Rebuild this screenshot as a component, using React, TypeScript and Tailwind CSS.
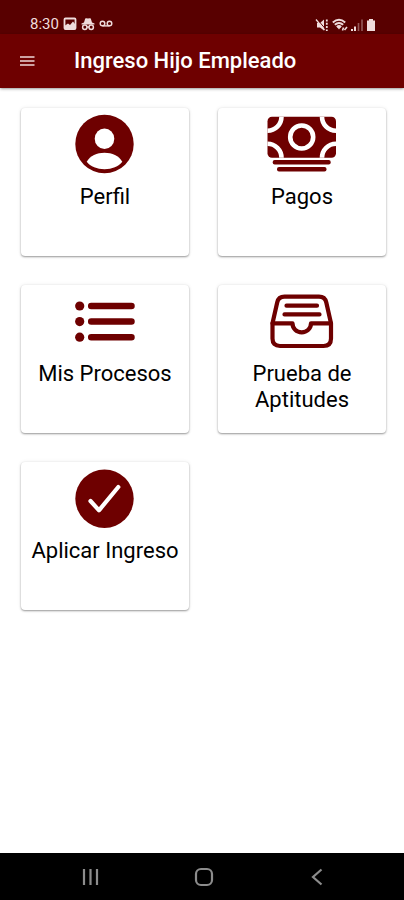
import React from 'react';

type Tile = {
  label: string;
  icon: React.ReactNode;
};

const ICON_CLASS = 'w-[76px] h-[76px] text-[#6e0000]';

function ProfileIcon() {
  return (
    <svg viewBox="0 1 76 76" className={ICON_CLASS} aria-hidden="true">
      <circle cx="37.5" cy="37" r="29.2" fill="currentColor" />
      <ellipse cx="37.5" cy="31.7" rx="9.8" ry="10.3" fill="white" />
      <path d="M19.7 54.8C23 48.8 30 45.8 37.5 45.8S52 48.8 55.3 54.8C51.5 59.5 45 62.2 37.5 62.2S23.5 59.5 19.7 54.8Z" fill="white" />
    </svg>
  );
}

function CashIcon() {
  return (
    <svg viewBox="0 1 76 76" className={ICON_CLASS} aria-hidden="true">
      <clipPath id="bill">
        <rect x="3.5" y="9.7" width="68.5" height="41" rx="4.5" />
      </clipPath>
      <g clipPath="url(#bill)">
        <rect x="3" y="9" width="70" height="42" fill="currentColor" />
        <g fill="none" stroke="white" strokeWidth="4.6">
          <circle cx="3.5" cy="9.7" r="14" />
          <circle cx="72" cy="9.7" r="14" />
          <circle cx="3.5" cy="50.7" r="14" />
          <circle cx="72" cy="50.7" r="14" />
          <circle cx="37.7" cy="30" r="11.5" />
        </g>
      </g>
      <rect x="8.7" y="53" width="58" height="4.6" rx="2" fill="currentColor" />
      <rect x="13" y="60" width="49.5" height="4.6" rx="2" fill="currentColor" />
    </svg>
  );
}

function ListIcon() {
  return (
    <svg viewBox="0 1 76 76" className={ICON_CLASS} aria-hidden="true">
      <g fill="currentColor">
        <circle cx="12.7" cy="22" r="4.6" />
        <circle cx="12.7" cy="37.6" r="4.6" />
        <circle cx="12.7" cy="53.2" r="4.6" />
      </g>
      <path d="M24.2 22H64.5M24.2 37.600H64.5M24.2 53.200H64.5" stroke="currentColor" strokeWidth="6.500" strokeLinecap="round" />
    </svg>
  );
}

function TrayIcon() {
  return (
    <svg viewBox="0 1 76 76" className={ICON_CLASS} aria-hidden="true">
      <g fill="none" stroke="currentColor" strokeWidth="4.2" strokeLinecap="round" strokeLinejoin="round">
        <path d="M8.5 39.3L13.2 18.5Q14.5 12.7 20.5 12.7H55Q61 12.7 62.3 18.5L67 39.3V54.500Q67 62 59.500 62H16Q8.500 62 8.500 54.500Z" />
        <path d="M8.5 39.3H28.5C28.5 44.5 32.5 48.3 37.7 48.3S47 44.5 47 39.3H67" />
        <path d="M22.5 21.7H53M20.5 30.4H55.5" />
      </g>
    </svg>
  );
}

function CheckIcon() {
  return (
    <svg viewBox="0 1 76 76" className={ICON_CLASS} aria-hidden="true">
      <circle cx="37.5" cy="37.7" r="29.2" fill="currentColor" />
      <path d="M23.5 40L32 49.3L51.300 26" fill="none" stroke="white" strokeWidth="4.2" strokeLinecap="round" strokeLinejoin="round" />
    </svg>
  );
}

const tiles: Tile[] = [
  { label: 'Perfil', icon: <ProfileIcon /> },
  { label: 'Pagos', icon: <CashIcon /> },
  { label: 'Mis Procesos', icon: <ListIcon /> },
  { label: 'Prueba de Aptitudes', icon: <TrayIcon /> },
  { label: 'Aplicar Ingreso', icon: <CheckIcon /> },
];

function StatusBar() {
  return (
    <div className="flex h-[34px] items-end justify-between bg-[#580000] pl-[30px] pr-7 pb-[2px] text-[#f0dcdc]">
      <div className="flex items-center gap-1">
        <span className="text-[15px] leading-4">8:30</span>
        {/* picture */}
        <svg viewBox="0 0 14 14" className="h-[14px] w-[14px]" aria-hidden="true">
          <rect x="1.5" y="1.5" width="11" height="10.5" rx="1" fill="none" stroke="currentColor" strokeWidth="1.8" />
          <path d="M2 11.500V8.500L5 6.500L7 8L10 4.500L12 7V11.500Z" fill="currentColor" />
        </svg>
        {/* incognito */}
        <svg viewBox="0 0 14 14" className="h-[14px] w-[14px]" aria-hidden="true">
          <path d="M4.2 1.5Q5 .8 7 1.5Q9 .8 9.8 1.5L11 5.5L13.5 6.5V7.5H.5V6.5L3 5.5Z" fill="currentColor" />
          <g fill="none" stroke="currentColor" strokeWidth="1.5">
            <circle cx="3.8" cy="10.3" r="2.2" />
            <circle cx="10.2" cy="10.3" r="2.2" />
            <path d="M6 10H8" />
          </g>
        </svg>
        {/* voicemail */}
        <svg viewBox="0 0 14 14" className="h-[14px] w-[14px]" aria-hidden="true">
          <g fill="none" stroke="currentColor" strokeWidth="1.4">
            <circle cx="3.5" cy="6.5" r="2.3" />
            <circle cx="10.5" cy="6.5" r="2.3" />
            <path d="M3.5 8.9H10.5" />
          </g>
        </svg>
      </div>
      <div className="flex items-center gap-[3px]">
        {/* muted with vibration */}
        <svg viewBox="0 0 14 14" className="h-[14px] w-[14px]" aria-hidden="true">
          <path d="M2 5H5L9 1.5V12.5L5 9.5H2Z" fill="currentColor" />
          <path d="M2 1L10 10.500" stroke="#580000" strokeWidth="1" />
          <path d="M1 1.500L9.500 12" stroke="currentColor" strokeWidth="1.300" />
          <path d="M11.8 1.500V3.500M11.8 4.800V6.800M11.8 8.100V10.100M11.8 11.400V13" fill="none" stroke="currentColor" strokeWidth="1.800" />
        </svg>
        {/* wifi */}
        <svg viewBox="0 0 16 14" className="h-[14px] w-4" aria-hidden="true">
          <g fill="none" stroke="currentColor" strokeWidth="1.9">
            <path d="M.8 4.5Q7 -1 13.2 4.5" />
            <path d="M2.8 6.8Q7 3 11.2 6.8" />
            <path d="M4.8 9Q7 7 9.2 9" />
          </g>
          <path d="M5 9H9L7 11.5Z" fill="currentColor" />
          <path d="M10.500 12.500L11.500 9.500M12.500 12L15 9" stroke="currentColor" strokeWidth="1.600" fill="none" />
        </svg>
        {/* signal */}
        <svg viewBox="0 0 12 14" className="h-[14px] w-3" aria-hidden="true">
          <path d="M1 13V11M4 13V8.5" stroke="currentColor" strokeWidth="2" />
          <path d="M7.5 13V5M11 13V1.5" stroke="currentColor" strokeOpacity="0.4" strokeWidth="1.6" />
        </svg>
        {/* battery */}
        <svg viewBox="0 0 10 14" className="h-[14px] w-[10px]" aria-hidden="true">
          <path d="M3 1H7V2.5H9V13H1V2.5H3Z" fill="currentColor" />
        </svg>
      </div>
    </div>
  );
}

function Header() {
  return (
    <header className="flex h-[54px] items-center bg-[#6e0000] pl-5 text-white shadow-sm shadow-black/30">
      <button type="button" aria-label="Menú" className="mr-[38px] flex h-8 w-4 items-center justify-center">
        <svg viewBox="0 0 16 12" className="h-3 w-4" aria-hidden="true">
          <path d="M0 2H14.500M0 6H14.500M0 10H14.500" stroke="#eed6d6" strokeWidth="1.5" />
        </svg>
      </button>
      <h1 className="text-[22px] leading-7 font-medium">Ingreso Hijo Empleado</h1>
    </header>
  );
}

function NavBar() {
  return (
    <nav className="flex h-[47px] items-center justify-around bg-black pl-[35px] pr-[31px] text-[#8c8c8c]">
      <button type="button" aria-label="Recientes">
        <svg viewBox="0 0 20 20" className="h-5 w-5" aria-hidden="true">
          <path d="M3 2V18M9.5 2V18M16 2V18" stroke="currentColor" strokeWidth="2.2" />
        </svg>
      </button>
      <button type="button" aria-label="Inicio">
        <svg viewBox="0 0 20 20" className="h-5 w-5" aria-hidden="true">
          <rect x="2" y="2" width="16" height="16" rx="5" fill="none" stroke="currentColor" strokeWidth="2.2" />
        </svg>
      </button>
      <button type="button" aria-label="Atrás">
        <svg viewBox="0 0 20 20" className="h-5 w-5" aria-hidden="true">
          <path d="M14.500 2.500L6 10L14.500 17.500" fill="none" stroke="currentColor" strokeWidth="2.2" />
        </svg>
      </button>
    </nav>
  );
}

export default function App() {
  return (
    <div className="flex min-h-screen flex-col bg-white font-[Roboto,'Liberation_Sans',sans-serif]">
      <StatusBar />
      <Header />
      <main className="flex-1 py-5 pl-[21px] pr-[18px]">
        <div className="grid grid-cols-2 gap-[29px]">
          {tiles.map((tile) => (
            <button
              key={tile.label}
              type="button"
              className="flex h-[148px] flex-col items-center rounded bg-white px-1 shadow-[0_1px_2px_rgba(0,0,0,0.38),0_0_4px_rgba(0,0,0,0.08)]"
            >
              {tile.icon}
              <span className="max-w-[150px] text-center text-[22px] leading-[26px] text-black">{tile.label}</span>
            </button>
          ))}
        </div>
      </main>
      <NavBar />
    </div>
  );
}
